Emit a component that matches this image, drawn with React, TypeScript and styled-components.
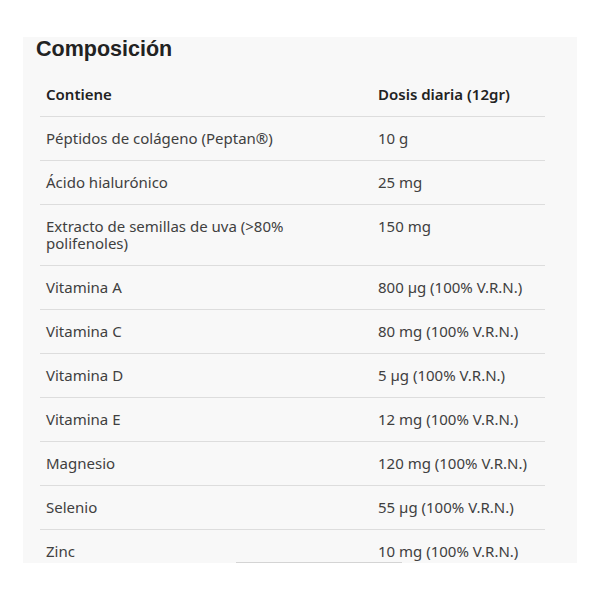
import React from "react";
import styled, { createGlobalStyle } from "styled-components";

const GlobalStyle = createGlobalStyle`
  body {
    margin: 0;
    background: #ffffff;
    font-family: "Noto Sans", "Liberation Sans", sans-serif;
  }
`;

const Panel = styled.section`
  position: relative;
  margin: 37px 23px 0;
  width: 554px;
  height: 526px;
  background: #f8f8f8;
  overflow: hidden;

  &::after {
    content: "";
    position: absolute;
    left: 213px;
    bottom: 0;
    width: 166px;
    height: 1px;
    background: #d4d4d4;
  }
`;

const Title = styled.h2`
  margin: 0 0 12px 13px;
  font-family: "Liberation Sans", Arial, sans-serif;
  font-size: 21.5px;
  line-height: 24px;
  font-weight: 700;
  color: #222222;
`;

const Table = styled.div`
  margin-left: 17px;
  width: 505px;
`;

const Row = styled.div<{ $head?: boolean }>`
  display: grid;
  grid-template-columns: 332px 173px;
  border-bottom: 1px solid #dddddd;
  font-size: 15px;
  line-height: 17px;
  color: ${(p) => (p.$head ? "#222222" : "#404040")};
  font-weight: ${(p) => (p.$head ? 600 : 400)};
`;

const Cell = styled.div`
  padding: 13px 24px 13px 6px;
  white-space: normal;

  &:last-child {
    padding-right: 0;
    white-space: nowrap;
  }
`;

const rows: [string, string][] = [
  ["Péptidos de colágeno (Peptan®)", "10 g"],
  ["Ácido hialurónico", "25 mg"],
  ["Extracto de semillas de uva (>80% polifenoles)", "150 mg"],
  ["Vitamina A", "800 µg (100% V.R.N.)"],
  ["Vitamina C", "80 mg (100% V.R.N.)"],
  ["Vitamina D", "5 µg (100% V.R.N.)"],
  ["Vitamina E", "12 mg (100% V.R.N.)"],
  ["Magnesio", "120 mg (100% V.R.N.)"],
  ["Selenio", "55 µg (100% V.R.N.)"],
  ["Zinc", "10 mg (100% V.R.N.)"],
];

const App = () => {
  return (
    <>
      <GlobalStyle />
      <Panel>
        <Title>Composición</Title>
        <Table>
          <Row $head>
            <Cell>Contiene</Cell>
            <Cell>Dosis diaria (12gr)</Cell>
          </Row>
          {rows.map(([name, dose]) => (
            <Row key={name}>
              <Cell>{name}</Cell>
              <Cell>{dose}</Cell>
            </Row>
          ))}
        </Table>
      </Panel>
    </>
  );
};

export default App;
